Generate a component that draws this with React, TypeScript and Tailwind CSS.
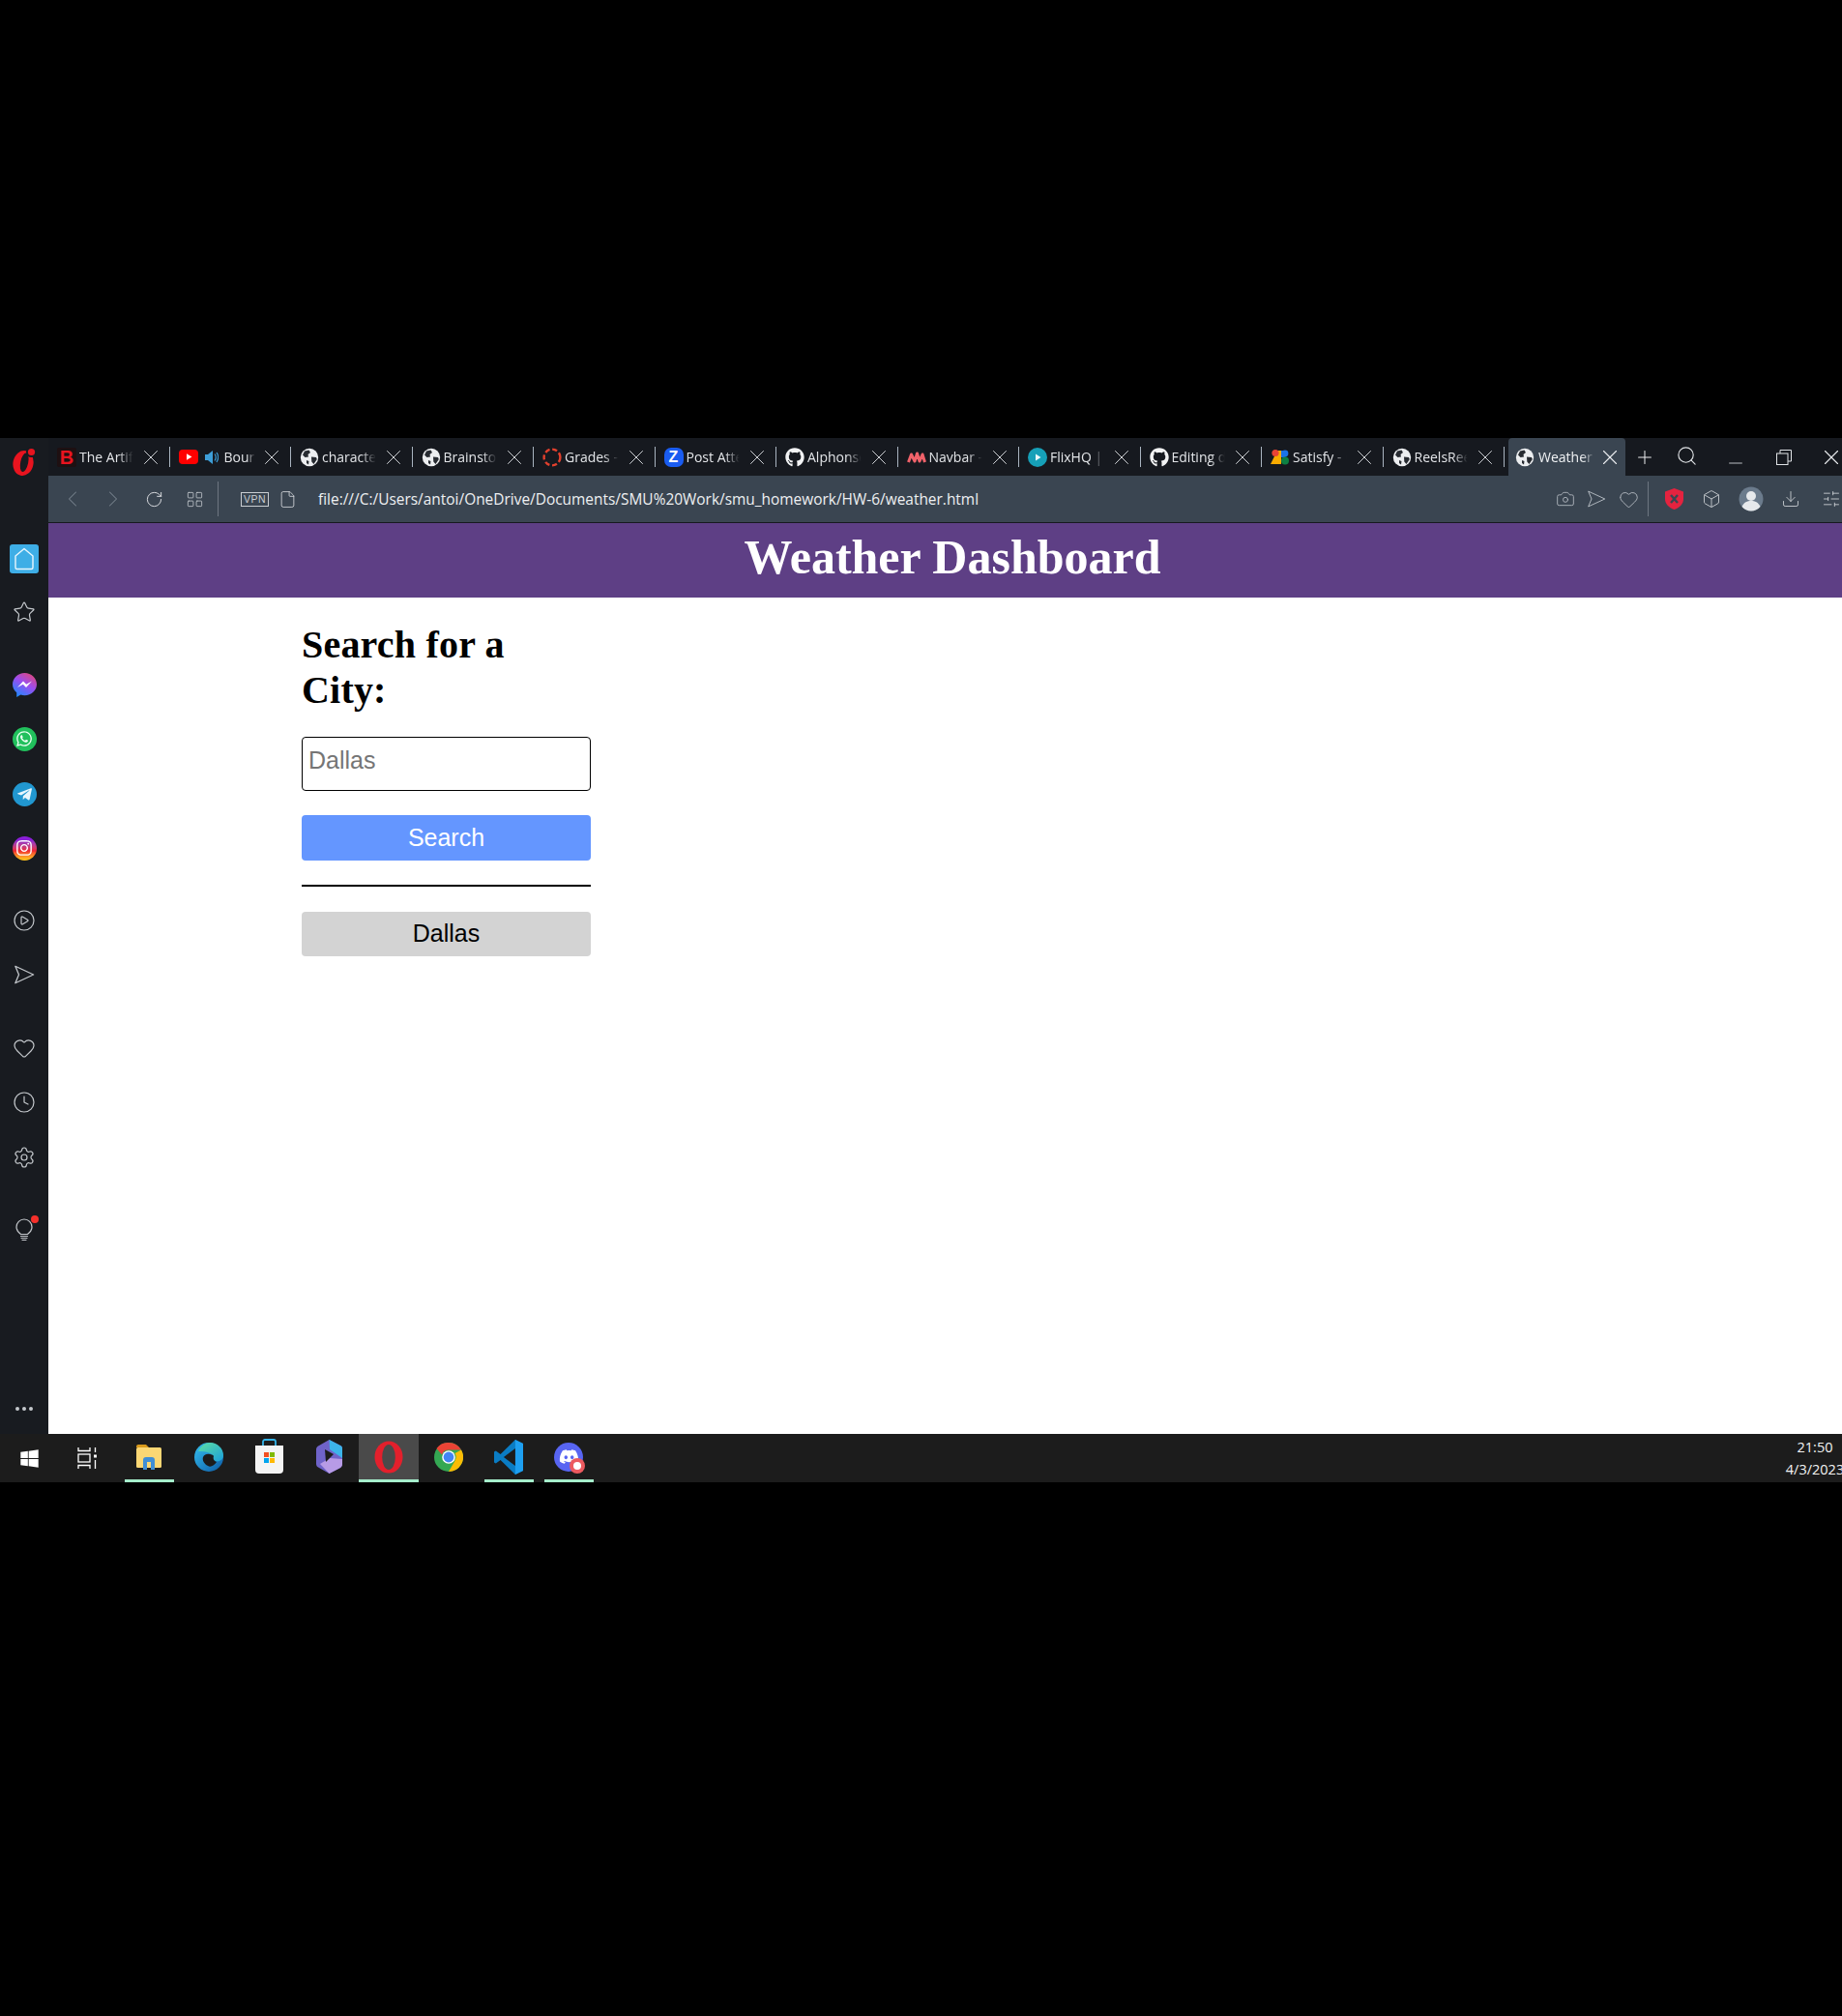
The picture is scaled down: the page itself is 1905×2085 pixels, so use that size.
import React from "react";
import { Star, CirclePlay, Heart, Clock, Settings, X, Plus, Search, ChevronLeft, ChevronRight, RotateCw, LayoutGrid, File, Camera, Box, Download, SlidersHorizontal, Minus } from "lucide-react";
import { FaGithub, FaWhatsapp, FaTelegramPlane, FaInstagram, FaWindows, FaDiscord } from "react-icons/fa";

const SendIcon = ({ size = 22, color = "#c4c8cc", sw = 1.4 }: { size?: number; color?: string; sw?: number }) => (
  <svg width={size} height={size} viewBox="0 0 24 24" fill="none" stroke={color} strokeWidth={sw} strokeLinejoin="round">
    <path d="M2 2.5 22.5 12 2 21.500 6 12z" />
  </svg>
);

const Globe = () => (
  <svg width="20" height="20" viewBox="0 0 20 20">
    <circle cx="10" cy="10" r="9.2" fill="#eceef0" />
    <path d="M5 3.500 9.500 2.500 11 5 8.500 7 9 9.500 5.500 10 3 7.500zM12 9.500l5 .5.800 2-3.300 5-2.200-2.500zM7 13l2.500 1-.5 3.500-2-1.500z" fill="#272b31" />
  </svg>
);

const Gh = () => <FaGithub size={20} color="#f2f3f4" />;

const BIcon = () => (
  <span className="flex h-[20px] w-[20px] items-center justify-center rounded-[2px] bg-[#1e1012] font-['Liberation_Sans',sans-serif] text-[20px] font-bold leading-none text-[#e8141f]">B</span>
);

const YouTube = () => (
  <span className="flex items-center gap-[7px] pr-[3px]">
    <svg width="20" height="15" viewBox="0 0 20 15">
      <rect width="20" height="15" rx="4" fill="#f00" />
      <path d="M8 4.200 13.500 7.500 8 10.800z" fill="#fff" />
    </svg>
    <svg width="14" height="16" viewBox="0 0 14 16">
      <path d="M0 5h3l5-4v14l-5-4H0z" fill="#3d9ed8" />
      <path d="M10 4.500c1.500 2 1.500 5 0 7M12 3c2 3 2 7 0 10" fill="none" stroke="#3d9ed8" strokeWidth="1.200" />
    </svg>
  </span>
);

const Canvas = () => (
  <svg width="20" height="20" viewBox="0 0 20 20">
    <circle cx="10" cy="10" r="8.400" fill="none" stroke="#e2402d" strokeWidth="2.400" strokeDasharray="5.200 2.700" />
  </svg>
);

const Zoom = () => (
  <span className="flex h-[20px] w-[20px] items-center justify-center rounded-[7px] bg-[#1a5cf0] font-['Liberation_Sans',sans-serif] text-[16px] font-bold leading-none text-white">Z</span>
);

const Wave = () => (
  <svg width="20" height="14" viewBox="0 0 20 14">
    <path d="M1.500 12 4.500 4 8 11 10.500 3 13 11 16 4 18.500 12" fill="none" stroke="#f0626a" strokeWidth="3" strokeLinejoin="round" />
  </svg>
);

const Flix = () => (
  <svg width="20" height="20" viewBox="0 0 20 20">
    <circle cx="10" cy="10" r="10" fill="#16a0b8" />
    <path d="M8 6.500 13.500 10 8 13.500z" fill="#eaf8fa" />
  </svg>
);

const GFonts = () => (
  <svg width="20" height="20" viewBox="0 0 20 20">
    <path d="M0 17 7 3h4v14z" fill="#f9ab00" />
    <circle cx="5" cy="5.500" r="3.600" fill="#ea4335" />
    <rect x="11" y="3" width="4.500" height="7" fill="#1a73e8" />
    <circle cx="15" cy="6" r="3.400" fill="#1a73e8" />
    <circle cx="15" cy="13.500" r="4" fill="#0d8043" />
  </svg>
);

const tabs: { icon: React.ReactNode; text: string }[] = [
  { icon: <BIcon />, text: "The Artificial" },
  { icon: <YouTube />, text: "Bourne Supremacy" },
  { icon: <Globe />, text: "character" },
  { icon: <Globe />, text: "Brainstorm" },
  { icon: <Canvas />, text: "Grades - " },
  { icon: <Zoom />, text: "Post Attendance" },
  { icon: <Gh />, text: "Alphonse" },
  { icon: <Wave />, text: "Navbar - " },
  { icon: <Flix />, text: "FlixHQ | Watch" },
  { icon: <Gh />, text: "Editing d" },
  { icon: <GFonts />, text: "Satisfy - Google" },
  { icon: <Globe />, text: "ReelsReel" },
];

function Tab({ icon, text }: { icon: React.ReactNode; text: string }) {
  return (
    <div className="flex h-full w-[125.5px] shrink-0 items-center pl-[9px]">
      <span className="flex shrink-0 items-center">{icon}</span>
      <span className="ml-[3px] min-w-0 flex-1 overflow-hidden whitespace-nowrap text-[14px] leading-[20px] text-[#e3e5e8] [mask-image:linear-gradient(to_right,black_70%,transparent_96%)]">
        {text}
      </span>
      <X size={26} strokeWidth={0.9} color="#d5d8dc" className="ml-[3px] mr-[6px] shrink-0" />
      <span className="h-[21px] w-[1px] shrink-0 bg-[#a9b4c0]" />
    </div>
  );
}

const Opera = () => (
  <svg width="28" height="32" viewBox="0 0 28 32">
    <g transform="rotate(12 13 18)">
      <ellipse cx="13" cy="18" rx="10.500" ry="13" fill="#e8141f" />
      <ellipse cx="14" cy="17" rx="4" ry="10" fill="#181b20" />
    </g>
    <circle cx="21.500" cy="6.500" r="5.500" fill="#181b20" />
    <circle cx="21.500" cy="6.500" r="3.600" fill="#e8141f" />
  </svg>
);

const Round = ({ bg, children }: { bg: string; children: React.ReactNode }) => (
  <span className={`flex h-[25px] w-[25px] items-center justify-center rounded-full ${bg}`}>{children}</span>
);

function Sidebar() {
  const ic = { size: 24, color: "#c4c8cc", strokeWidth: 1.2 };
  return (
    <aside className="flex h-full w-[50px] shrink-0 flex-col items-center bg-[#181b20] pt-[9px] pb-[17px]">
      <div className="flex h-[30px] items-center justify-center"><Opera /></div>
      <div className="mt-[71px] flex h-[30px] w-[30px] items-center justify-center rounded-[3px] bg-[#3eaee6]">
        <svg width="24" height="26" viewBox="0 0 24 26" fill="none" stroke="#e8f6fd" strokeWidth="1.400" strokeLinejoin="round">
          <path d="M12 2.500 21 10v12a1.500 1.500 0 0 1-1.500 1.500h-15A1.500 1.500 0 0 1 3 22V10z" />
        </svg>
      </div>
      <div className="mt-[25px] flex h-[30px] items-center"><Star {...ic} /></div>
      <div className="mt-[46px] flex h-[30px] items-center">
        <svg width="25" height="26" viewBox="0 0 25 26">
          <defs><linearGradient id="ms" x1="0.800" y1="0" x2="0.200" y2="1"><stop offset="0" stopColor="#e0487a" /><stop offset="0.450" stopColor="#9a4df0" /><stop offset="1" stopColor="#1a8cff" /></linearGradient></defs>
          <path d="M12.500 0C5.600 0 0 5.200 0 11.800c0 3.500 1.600 6.500 4.200 8.500V25l4.200-2.400c1.300.4 2.700.6 4.100.6 6.900 0 12.500-5.200 12.500-11.400S19.400 0 12.500 0z" fill="url(#ms)" />
          <path d="M5 15 11 8.500 14.200 11.800 20 8.500 14 15 10.800 11.800z" fill="#fff" />
        </svg>
      </div>
      <div className="mt-[25px] flex h-[30px] items-center"><Round bg="bg-[#21c05c]"><FaWhatsapp size={18} color="#eafff2" /></Round></div>
      <div className="mt-[27px] flex h-[30px] items-center"><Round bg="bg-[#2197d0]"><FaTelegramPlane size={17} color="#e8f6fd" /></Round></div>
      <div className="mt-[26px] flex h-[30px] items-center"><Round bg="bg-gradient-to-t from-[#fbbf1a] from-5% via-[#f0222e] via-40% to-[#8b1fd8] to-85%"><FaInstagram size={18} color="#fff" /></Round></div>
      <div className="mt-[45px] flex h-[30px] items-center"><CirclePlay {...ic} /></div>
      <div className="mt-[26px] flex h-[30px] items-center"><SendIcon /></div>
      <div className="mt-[46px] flex h-[30px] items-center"><Heart {...ic} /></div>
      <div className="mt-[26px] flex h-[30px] items-center"><Clock {...ic} /></div>
      <div className="mt-[27px] flex h-[30px] items-center"><Settings {...ic} /></div>
      <div className="relative mt-[45px] flex h-[30px] items-center">
        <svg width="18" height="24" viewBox="0 0 18 24" fill="none" stroke="#c4c8cc" strokeWidth="1.200" strokeLinecap="round">
          <path d="M5.500 16.500C3.500 15 1 13 1 9a8 8 0 0 1 16 0c0 4-2.500 6-4.500 7.500z" />
          <path d="M5.500 18.500h7M6 20.500h6M7 22.500h4" />
        </svg>
        <span className="absolute right-[-6px] top-[0px] h-[8px] w-[8px] rounded-full bg-[#f5302b]" />
      </div>
      <div className="mt-auto mb-[-6px] flex h-[30px] items-center">
        <svg width="20" height="6" viewBox="0 0 20 6" fill="#c4c8cc"><circle cx="3" cy="3" r="2" /><circle cx="10" cy="3" r="2" /><circle cx="17" cy="3" r="2" /></svg>
      </div>
    </aside>
  );
}

function Strip() {
  const s = "flex h-[30px] w-[30px] shrink-0 items-center justify-center";
  return (
    <div className="flex h-[39px] shrink-0 items-center bg-[#16191f]">
      {tabs.map((t) => <Tab key={t.text} {...t} />)}
      <div className="ml-[4px] flex h-full w-[121px] shrink-0 items-center rounded-t-[4px] bg-[#3a4551] pl-[7px]">
        <Globe />
        <span className="ml-[4px] w-[60px] overflow-hidden whitespace-nowrap text-[14px] leading-[20px] text-[#f0f2f4] [mask-image:linear-gradient(to_right,black_75%,transparent_98%)]">Weather</span>
        <X size={26} strokeWidth={1} color="#eceef0" className="ml-[1px] shrink-0" />
      </div>
      <div className={`${s} ml-[5px]`}><Plus size={22} strokeWidth={1.1} color="#eceef0" /></div>
      <div className={`${s} ml-[13px] pb-[2px]`}><Search size={23} strokeWidth={1.2} color="#e0e3e6" /></div>
      <div className={`${s} ml-[21px] pt-[13px]`}><Minus size={22} strokeWidth={0.9} color="#e0e3e6" /></div>
      <div className={`${s} ml-[20px]`}>
        <svg width="16" height="16" viewBox="0 0 16 16" fill="none" stroke="#e0e3e6" strokeWidth="1"><rect x="0.500" y="4" width="11.500" height="11.500" /><path d="M4 4V.5h11.500V12H12" /></svg>
      </div>
      <div className={`${s} ml-[19px]`}><X size={26} strokeWidth={1} color="#eceef0" /></div>
    </div>
  );
}

function Toolbar() {
  const s = "flex h-[30px] shrink-0 items-center justify-center";
  const c = "#b9bfc6";
  return (
    <div className="flex h-[49px] shrink-0 items-center border-b border-[#16191f] bg-[#3a4551] pl-[4px] pr-[11px]">
      <div className={`${s} w-[42px]`}><ChevronLeft size={28} strokeWidth={0.9} color="#76808b" /></div>
      <div className={`${s} w-[42px]`}><ChevronRight size={28} strokeWidth={0.9} color="#76808b" /></div>
      <div className={`${s} w-[42px]`}><RotateCw size={19} strokeWidth={1.2} color="#dfe2e5" /></div>
      <div className={`${s} w-[42px]`}><LayoutGrid size={19} strokeWidth={1} color="#c9cdd2" /></div>
      <span className="ml-[3px] h-[36px] w-[1px] bg-[#6d7681]" />
      <span className="ml-[23px] flex h-[15px] w-[29px] items-center justify-center border border-[#c9cdd2] font-['Liberation_Sans',sans-serif] text-[10.5px] leading-none tracking-[0.5px] text-[#c9cdd2]">VPN</span>
      <File size={19} strokeWidth={1} color="#dfe2e5" className="ml-[10px]" />
      <span className="ml-[22px] whitespace-nowrap text-[15.45px] leading-[20px] text-[#eef0f2]">file:///C:/Users/antoi/OneDrive/Documents/SMU%20Work/smu_homework/HW-6/weather.html</span>
      <div className={`${s} ml-auto w-[30px]`}><Camera size={20} strokeWidth={1} color={c} /></div>
      <div className={`${s} ml-[2px] w-[30px]`}><SendIcon size={20} color={c} sw={1.1} /></div>
      <div className={`${s} ml-[3px] w-[30px]`}><Heart size={21} strokeWidth={1} color={c} /></div>
      <span className="ml-[5px] h-[36px] w-[1px] bg-[#6d7681]" />
      <div className={`${s} ml-[11px] w-[30px]`}>
        <svg width="21" height="24" viewBox="0 0 21 24">
          <path d="M10.500 1 20 4.500V12c0 5.500-4 9-9.500 11C5 21 1 17.500 1 12V4.500z" fill="#e4233f" />
          <path d="M7 8l7 8M14 8l-7 8" stroke="#3a4551" strokeWidth="2.400" />
        </svg>
      </div>
      <div className={`${s} ml-[9px] w-[30px]`}><Box size={20} strokeWidth={1} color="#d5d8dc" /></div>
      <div className={`${s} ml-[11px] w-[30px]`}>
        <svg width="26" height="26" viewBox="0 0 26 26">
          <circle cx="13" cy="13" r="12.500" fill="#6b7b8c" />
          <circle cx="13" cy="10" r="5" fill="#e6e9ec" />
          <path d="M3.500 21c2-4.500 5.500-6 9.500-6s7.500 1.500 9.500 6A12.500 12.500 0 0 1 13 25.500 12.500 12.500 0 0 1 3.500 21z" fill="#e6e9ec" />
        </svg>
      </div>
      <div className={`${s} ml-[11px] w-[30px]`}><Download size={20} strokeWidth={1} color="#d5d8dc" /></div>
      <div className={`${s} ml-[12px] w-[30px]`}><SlidersHorizontal size={20} strokeWidth={1} color="#d5d8dc" /></div>
    </div>
  );
}

function Page() {
  const arial = "font-['Liberation_Sans',Arial,sans-serif]";
  return (
    <main className="flex-1 overflow-hidden bg-white">
      <header className="flex h-[77px] items-center justify-center bg-[#5e3f85] pb-[7px] font-['Liberation_Serif',serif] text-[50px] font-bold leading-none text-white">
        <h1>Weather Dashboard</h1>
      </header>
      <section className="ml-[262px] mt-[25px] flex w-[299px] flex-col gap-[25px]">
        <h2 className="font-['Liberation_Serif',serif] text-[40px] font-bold leading-[47px] tracking-[0.2px] text-black">Search for a City:</h2>
        <input
          readOnly
          placeholder="Dallas"
          className={`h-[56px] w-full rounded-[4px] border border-black bg-white px-[6px] pb-[8px] text-[25px] text-black outline-none placeholder:text-[#757575] ${arial}`}
        />
        <button className={`h-[47px] w-full rounded-[4px] bg-[#6496ff] text-[25px] text-white ${arial}`}>Search</button>
        <hr className="border-t-[2px] border-black" />
        <button className={`mt-[1px] h-[46px] w-full rounded-[4px] bg-[#d3d3d3] text-[25px] text-black ${arial}`}>Dallas</button>
      </section>
    </main>
  );
}

const Slot = ({ children, active, line }: { children: React.ReactNode; active?: boolean; line?: boolean }) => (
  <div className={`flex h-full w-[62px] shrink-0 justify-center ${active ? "bg-[#4a4a4a]" : ""}`}>
    <div className={`flex h-full shrink-0 items-center justify-center border-b-[3px] ${active ? "w-[62px]" : "w-[51px]"} ${line ? "border-[#a5eecb]" : "border-transparent"}`}>
      {children}
    </div>
  </div>
);

function Taskbar() {
  return (
    <footer className="flex h-[50px] shrink-0 items-center bg-[#1c1c1c]">
      <div className="flex w-[60px] shrink-0 justify-center"><FaWindows size={21} color="#fff" /></div>
      <div className="flex w-[60px] shrink-0 justify-center">
        <svg width="21" height="24" viewBox="0 0 21 24" fill="none" stroke="#fff" strokeWidth="1.300">
          <path d="M1 1v3.500h12V1M1 23v-3.500h12V23" /><rect x="1" y="8" width="12" height="8" /><path d="M18.500 1v5M18.500 14v9" />
          <rect x="17" y="8.500" width="3" height="3" fill="#fff" stroke="none" />
        </svg>
      </div>
      <div className="flex h-full items-center">
        <div className="ml-[3px] h-full">
          <Slot line>
            <svg width="28" height="27" viewBox="0 0 28 27">
              <path d="M1 3a2 2 0 0 1 2-2h8l3 3h-13z" fill="#d99a1c" />
              <rect x="1" y="4" width="26" height="21" rx="1.500" fill="#fbd774" />
              <path d="M8 27V17a3 3 0 0 1 3-3h6a3 3 0 0 1 3 3v10h-4v-8h-4v8z" fill="#3f8ed6" />
            </svg>
          </Slot>
        </div>
        <div className="flex h-full items-center">
          <Slot>
            <svg width="30" height="30" viewBox="0 0 30 30">
              <defs><linearGradient id="e1" x1="0" y1="0" x2="1" y2="1"><stop offset="0" stopColor="#35c1f1" /><stop offset="1" stopColor="#0c59a4" /></linearGradient><linearGradient id="e2" x1="0" y1="0" x2="1" y2="1"><stop offset="0" stopColor="#5fe0a0" /><stop offset="1" stopColor="#1ba0dc" /></linearGradient></defs>
              <circle cx="15" cy="15" r="15" fill="url(#e1)" />
              <path d="M4 9C7 3 12 0 16 0c8 0 14 6 14 13 0 5-4 7-8 6-3-1-3-3-2-5-2-3-7-5-16-5z" fill="url(#e2)" />
              <path d="M9 15c2-5 10-3 11-1-1 2 0 5 3 6-2 3-6 6-9 4-4-2-6-6-5-9z" fill="#1c1c1c" />
            </svg>
          </Slot>
          <Slot>
            <svg width="29" height="37" viewBox="0 0 29 37">
              <path d="M8 8V3a2 2 0 0 1 2-2h9a2 2 0 0 1 2 2v5" fill="none" stroke="#35b5ea" strokeWidth="1.800" />
              <path d="M0 7h29v25a4 4 0 0 1-4 4H4a4 4 0 0 1-4-4z" fill="#f4f4f4" />
              <rect x="9" y="14" width="5" height="5" fill="#f25022" /><rect x="15" y="14" width="5" height="5" fill="#7fba00" /><rect x="9" y="20" width="5" height="5" fill="#00a4ef" /><rect x="15" y="20" width="5" height="5" fill="#ffb900" />
            </svg>
          </Slot>
          <Slot>
            <svg width="27" height="35" viewBox="0 0 27 35">
              <path d="M13.500 0 25 6c2 1 2 2 2 4v15c0 2-1 3-2 4l-11.500 6L3 29c-2-1-3-2-3-4V10c0-2 1-3 3-4z" fill="#6f63c9" />
              <path d="M13.500 0 25 6c2 1 2 2 2 4v9l-13-9z" fill="#3cb4ea" />
              <path d="M4 25l10-6 13 1v5c0 2-1 3-2 4l-11.500 6z" fill="#b79be6" />
              <path d="M9 10l9 5-8 8z" fill="#1c1c1c" />
            </svg>
          </Slot>
          <Slot active line>
            <svg width="30" height="34" viewBox="0 0 30 34">
              <ellipse cx="15" cy="17" rx="14.500" ry="16.500" fill="#e3202c" />
              <ellipse cx="15" cy="17" rx="6.800" ry="13" fill="#4a4a4a" />
            </svg>
          </Slot>
          <Slot>
            <svg width="30" height="30" viewBox="0 0 30 30">
              <circle cx="15" cy="15" r="15" fill="#34a853" />
              <path d="M15 0a15 15 0 0 1 13 7.500H15a7.500 7.500 0 0 0-7 5L2.500 6A15 15 0 0 1 15 0z" fill="#ea4335" />
              <path d="M28 7.500A15 15 0 0 1 15 30l6.500-11.300A7.500 7.500 0 0 0 21.500 11z" fill="#fbbc05" />
              <circle cx="15" cy="15" r="6.800" fill="#fff" /><circle cx="15" cy="15" r="5.400" fill="#4285f4" />
            </svg>
          </Slot>
          <Slot line>
            <svg width="30" height="36" viewBox="0 0 100 120">
              <path d="M73 0 100 13v94l-27 13-51-50L6 82 0 78V42l6-4 16 12z" fill="#0a7cc4" />
              <path d="M73 0 100 13v94l-27 13z" fill="#1e9ff0" />
              <path d="M73 30v60L33 60z" fill="#1c1c1c" />
            </svg>
          </Slot>
          <Slot line>
            <span className="relative flex h-[30px] w-[30px] items-center justify-center rounded-full bg-[#5865f2]">
              <FaDiscord size={21} color="#fff" />
              <span className="absolute right-[-2px] bottom-[-2px] flex h-[16px] w-[16px] items-center justify-center rounded-full bg-[#ec5a5f]">
                <span className="h-[8px] w-[8px] rounded-full bg-white" />
              </span>
            </span>
          </Slot>
        </div>
      </div>
      <div className="ml-auto mr-[13px] flex w-[60px] shrink-0 flex-col items-center whitespace-nowrap text-[14.5px] leading-[23px] text-[#f2f2f2]">
        <span>21:50</span>
        <span>4/3/2023</span>
      </div>
    </footer>
  );
}

export default function App() {
  return (
    <div className="flex min-h-[2085px] flex-col overflow-hidden bg-black font-['Open_Sans',sans-serif]">
      <div className="mt-[453px] flex h-[1080px] w-[1920px] flex-col">
        <div className="flex h-[1030px] min-h-0">
          <Sidebar />
          <div className="flex min-w-0 flex-1 flex-col">
            <Strip />
            <Toolbar />
            <Page />
          </div>
        </div>
        <Taskbar />
      </div>
    </div>
  );
}
